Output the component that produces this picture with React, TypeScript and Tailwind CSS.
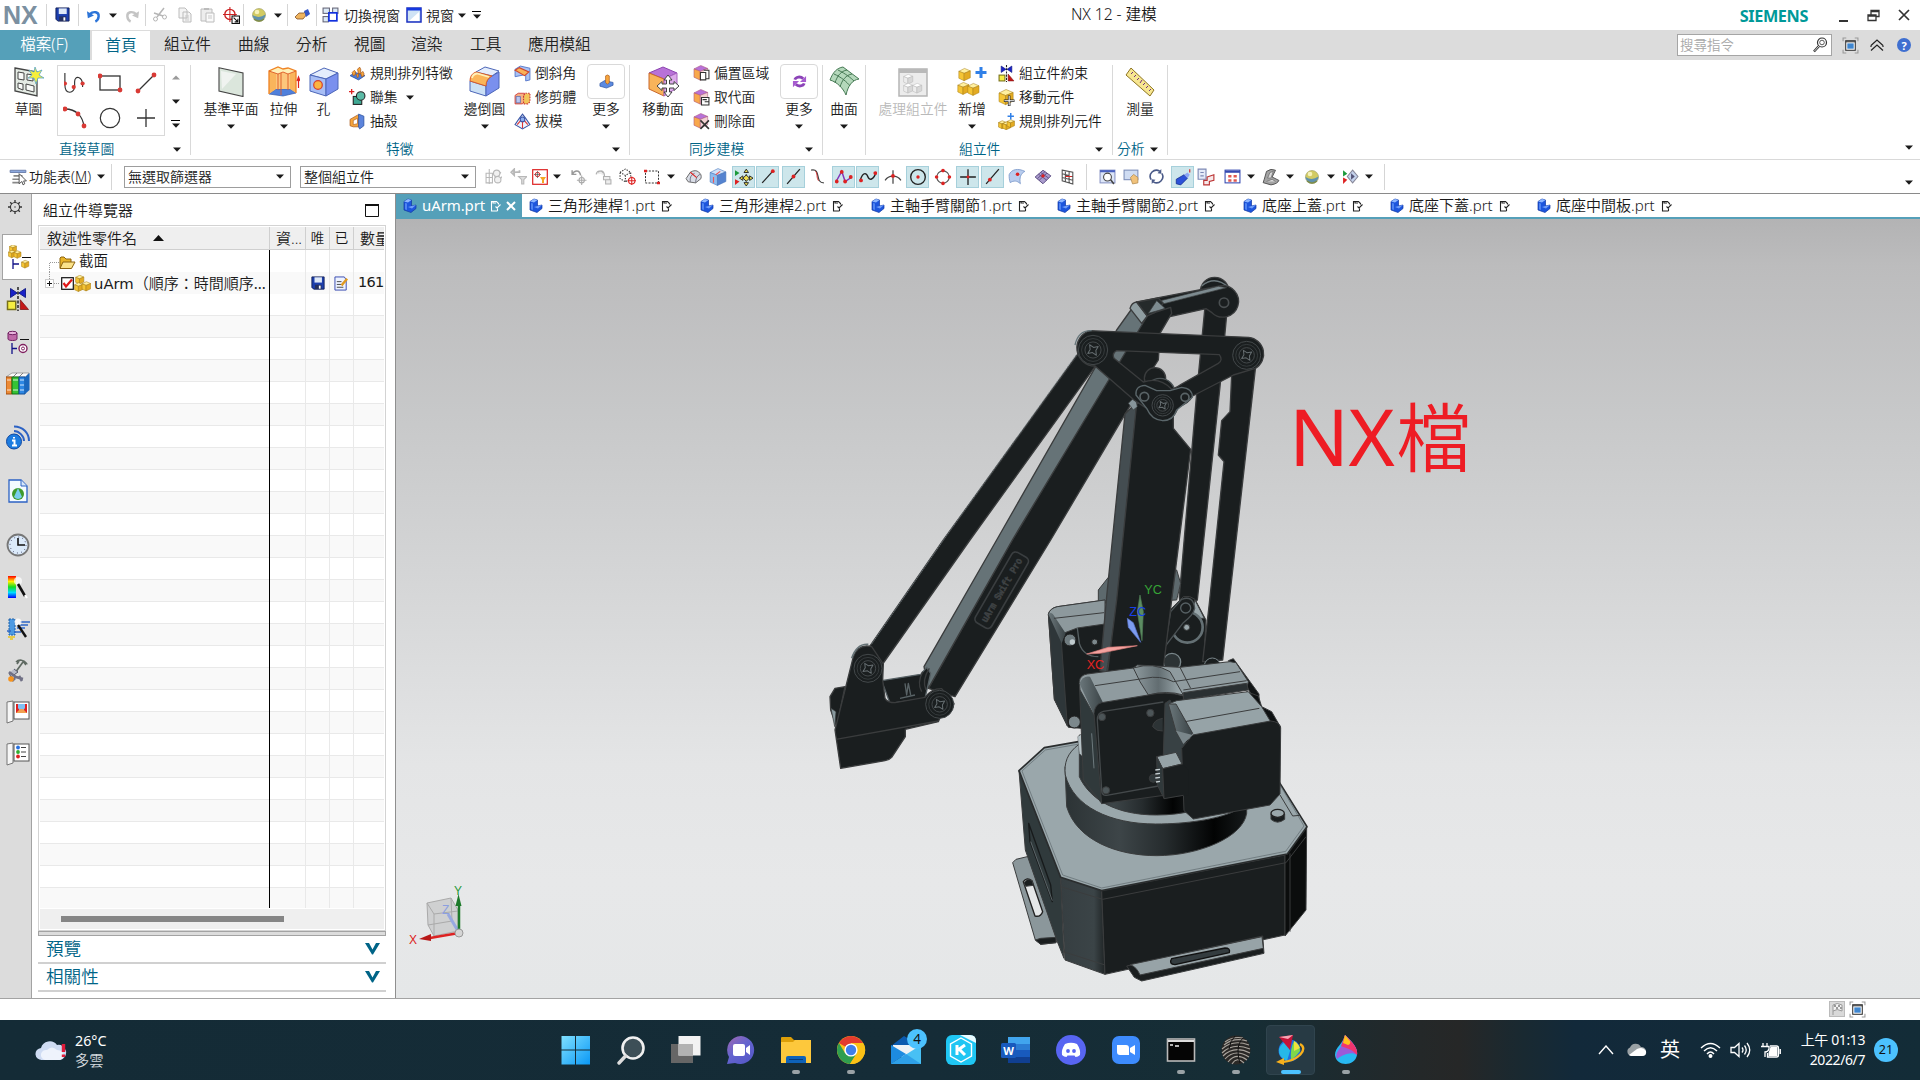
import React from "react";
import type { ReactNode } from "react";

const Ico = ({ s = 16, vb = "0 0 16 16", children }: { s?: number; vb?: string; children: ReactNode }) => (
  <svg width={s} height={s} viewBox={vb} className="shrink-0" fill="none">
    {children}
  </svg>
);

const Arrow = ({ color = "#1a1a1a", up = false }: { color?: string; up?: boolean }) => (
  <svg width="8" height="5" viewBox="0 0 8 5" className="shrink-0">
    <path d={up ? "M0 4.5L4 .5L8 4.5Z" : "M0 .5H8L4 4.7Z"} fill={color} />
  </svg>
);

const Cube = ({ a, b, c, x = 0, y = 0, k = 1, st = "#555" }: { a: string; b: string; c: string; x?: number; y?: number; k?: number; st?: string }) => (
  <g transform={`translate(${x} ${y}) scale(${k})`} stroke={st} strokeWidth={0.5 / k} strokeLinejoin="round">
    <path d="M8 .5L15 3.500L7.500 6.500L1 4Z" fill={a} />
    <path d="M1 4L7.500 6.500V15.500L1 12.500Z" fill={b} />
    <path d="M15 3.500L7.500 6.500V15.500L15 12Z" fill={c} />
  </g>
);

const Gold = ({ x = 0, y = 0, k = 0.5 }: { x?: number; y?: number; k?: number }) => (
  <Cube a="#fff0a0" b="#f5c535" c="#e3ab22" st="#a67c14" x={x} y={y} k={k} />
);

/* ---------- title bar icons ---------- */
const Save = ({ s = 15 }: { s?: number }) => (
  <Ico s={s}>
    <path d="M1 1H15V15H3L1 13Z" fill="#1d3fae" stroke="#101e55" />
    <rect x="4" y="1.5" width="8.5" height="6" fill="#dfe9f7" />
    <rect x="4.5" y="10" width="7.5" height="5" fill="#25305e" />
    <rect x="9" y="11" width="2" height="3.5" fill="#fff" />
  </Ico>
);
const Undo = ({ c = "#2c74d8", flip = false }: { c?: string; flip?: boolean }) => (
  <Ico s={15}>
    <g transform={flip ? "translate(16 0) scale(-1 1)" : undefined}>
      <path d="M4 6.500C8 3 14 4 13.500 9C13.300 11.500 12 13.500 10 14.500" stroke={c} strokeWidth="2.600" />
      <path d="M1 3.500L2 11L8.500 8Z" fill={c} />
    </g>
  </Ico>
);
const Sphere = () => (
  <Ico s={16}>
    <circle cx="8" cy="8" r="6.500" fill="#d2cb62" stroke="#9b9a60" strokeWidth=".6" />
    <path d="M1.600 8Q8 12 14.400 7.500A6.500 6.500 0 0 1 1.600 9Z" fill="#5f91ad" />
    <path d="M3 12Q8 16 13 12" stroke="#7e8c4c" strokeWidth="1.500" />
    <circle cx="6" cy="5" r="2.300" fill="#fffbd0" opacity=".8" />
  </Ico>
);
const Part = () => (
  <svg width="14" height="15" viewBox="0 0 14 15" className="shrink-0">
    <path d="M1 3.500L5 1L8.500 2V8L13 7V10.500L8 14.500L1 12Z" fill="#1c55dd" stroke="#1238a0" strokeWidth=".7" />
    <path d="M1 3.500L5 1L8.500 2L5 4.500Z" fill="#8db6ff" />
    <path d="M5 9L8.500 8L13 7L9 10.500Z" fill="#6f9dfa" />
    <path d="M2 5L4 5.500V12L2 11.300Z" fill="#4f84f2" />
  </svg>
);
const Note = ({ c = "#222" }: { c?: string }) => (
  <svg width="11" height="12" viewBox="0 0 11 12" fill="none" stroke={c} strokeWidth="1.100" className="shrink-0">
    <path d="M7.500 11H1.500V1.500H6.500L8.500 3.500V4.500M3 1V3H6M5.500 6.500L7 8L10.500 4.500M7.500 11V8.500" />
  </svg>
);
const FullIcon = () => (
  <Ico s={17}>
    <path d="M1 4V1H4M12 1H15V4M15 12V15H12M4 15H1V12" stroke="#999" />
    <rect x="3.500" y="3.500" width="9" height="9" fill="#fff" stroke="#333" />
    <rect x="5" y="6" width="6" height="5" fill="#3f86cf" />
    <path d="M3.500 4.500H12.500" stroke="#333" />
  </Ico>
);

const VSep = ({ cls }: { cls: string }) => <div className={`w-px shrink-0 bg-[#d5d5d5] ${cls}`} />;

function TitleBar() {
  return (
    <header className="flex h-[30px] w-full items-center bg-white text-[14px] whitespace-nowrap text-[#1a1a1a]">
      <span className="w-[46px] pl-[3px] text-[25px] leading-[30px] font-bold text-[#7b90a1] [font-family:'Liberation_Sans',sans-serif]">NX</span>
      <VSep cls="h-[22px]" />
      <div className="flex w-[31px] justify-center pb-px"><Save /></div>
      <VSep cls="h-[22px]" />
      <div className="flex w-[28px] justify-center"><Undo /></div>
      <div className="flex w-[12px] justify-center"><Arrow /></div>
      <div className="flex w-[26px] justify-center"><Undo c="#c4c4c4" flip /></div>
      <VSep cls="h-[22px]" />
      <div className="flex w-[28px] justify-center">
        <Ico><path d="M12 1L5 10M2 6L11 9" stroke="#b5b5b5" strokeWidth="1.500" /><circle cx="3.500" cy="12" r="2" stroke="#b5b5b5" /><circle cx="12.500" cy="10" r="2" stroke="#b5b5b5" /></Ico>
      </div>
      <div className="flex w-[22px] justify-center">
        <Ico><path d="M2 1H8L10 3V11H2ZM6 5H12L14 7V15H6Z" fill="#f4f4f4" stroke="#bcbcbc" /><path d="M8 9H12M8 11H12M8 13H12" stroke="#c9c9c9" /></Ico>
      </div>
      <div className="flex w-[23px] justify-center">
        <Ico><path d="M1 2H12V14H1Z" fill="#ededed" stroke="#bcbcbc" /><path d="M4 1H9V3H4Z" fill="#bbb" /><path d="M6 6H14V15H6Z" fill="#fafafa" stroke="#bcbcbc" /><path d="M8 9H12M8 11H12" stroke="#c9c9c9" /></Ico>
      </div>
      <div className="flex w-[24px] justify-center">
        <Ico s={17}><circle cx="6.500" cy="7" r="4.800" stroke="#c22" strokeWidth="1.300" /><path d="M6.500 0V14M0 7H13" stroke="#c22" /><rect x="8.500" y="8.500" width="7" height="7" fill="#fff" stroke="#111" /><path d="M10 10L14 14M14 11V14H11" stroke="#111" /></Ico>
      </div>
      <VSep cls="h-[22px]" />
      <div className="flex w-[30px] justify-center"><Sphere /></div>
      <div className="flex w-[8px] justify-center"><Arrow /></div>
      <VSep cls="ml-[5px] h-[22px]" />
      <div className="flex w-[28px] justify-center">
        <Ico><path d="M1 10L5 6L10 6L12 4L14 6L9 12L3 12Z" fill="#efb45e" stroke="#80502a" strokeWidth=".8" /><path d="M10 4L14 2L16 7L12 10Z" fill="#3557c8" /></Ico>
      </div>
      <VSep cls="h-[22px]" />
      <div className="flex w-[27px] justify-center">
        <Ico s={17}><rect x="1" y="1" width="6" height="5" fill="#dceaf8" stroke="#667" /><rect x="10" y="1" width="5" height="5" fill="#dceaf8" stroke="#667" /><rect x="1" y="9" width="5" height="5" fill="#dceaf8" stroke="#667" /><rect x="6.500" y="5.500" width="7.500" height="7.500" fill="#fff" stroke="#1130dd" strokeWidth="1.600" /></Ico>
      </div>
      <span>切換視窗</span>
      <div className="ml-[6px] flex w-[20px]">
        <Ico s={16}><rect x="1" y="1" width="14" height="14" fill="#cfe3f5" stroke="#1a2fc0" strokeWidth="1.500" /><path d="M1 1H15V3.500H1Z" fill="#1438e0" /><path d="M3 14L13 5V14Z" fill="#fff" /></Ico>
      </div>
      <span>視窗</span>
      <div className="ml-[4px] flex"><Arrow /></div>
      <div className="ml-[6px] flex flex-col items-center gap-[2px]"><span className="h-px w-[9px] bg-black" /><Arrow /></div>
      <span className="ml-[590px] w-[90px] text-[15.700px] tracking-[-0.1px]">NX 12 - 建模</span>
      <span className="ml-auto pt-[3px] text-[16.300px] font-bold tracking-[-0.4px] text-[#099] [font-family:'Noto_Sans',sans-serif]">SIEMENS</span>
      <div className="ml-[31px] flex h-full w-[81px] items-center gap-[19px]">
        <span className="mt-[11px] h-[2px] w-[9px] bg-[#333]" />
        <svg width="13" height="13" viewBox="0 0 13 13" fill="none" stroke="#333" strokeWidth="1.300"><path d="M1 6H9V11.500H1ZM1 7H9M4 5.500V1.500H12V7.500H9.500M4 2.500H12" /></svg>
        <svg width="12" height="12" viewBox="0 0 12 12" stroke="#333" strokeWidth="1.700" className="-ml-[1px]"><path d="M1 1L11 11M11 1L1 11" /></svg>
      </div>
    </header>
  );
}

function MenuTabs() {
  return (
    <nav className="flex h-[30px] w-full items-center bg-[#dcdcdc] text-[15.700px] whitespace-nowrap text-[#222]">
      <span className="flex h-full w-[90px] items-center justify-center bg-[#55a0b9] pr-[2px] text-[15.600px] text-white">檔案(F)</span>
      <span className="mt-px ml-[2px] flex h-[29px] w-[58px] items-center justify-center bg-white text-[#006487]">首頁</span>
      <span className="ml-[14px] w-[74px]">組立件</span>
      <span className="w-[58px]">曲線</span>
      <span className="w-[58px]">分析</span>
      <span className="w-[57px]">視圖</span>
      <span className="w-[59px]">渲染</span>
      <span className="w-[58px]">工具</span>
      <span>應用模組</span>
      <div className="ml-auto flex h-[22px] w-[155px] items-center justify-between border border-[#a5a5a5] bg-white pr-[3px] pl-[2px] text-[13.500px] text-[#a8a8a8]">
        <span>搜尋指令</span>
        <Ico><circle cx="10" cy="5.500" r="4.500" stroke="#333" strokeWidth="1.200" /><circle cx="10" cy="5.500" r="2.300" stroke="#333" strokeWidth=".8" /><path d="M7 9L2 14.500" stroke="#333" strokeWidth="2.500" /><path d="M7 9L2.500 14" stroke="#fff" strokeWidth=".8" /></Ico>
      </div>
      <div className="ml-[10px] flex w-[78px] items-center">
        <FullIcon />
        <svg width="14" height="12" viewBox="0 0 14 12" className="ml-[11px]"><path d="M1 6.500L7 1L13 6.500M1 11.500L7 6L13 11.500M1 6.500V8M13 6.500V8" fill="none" stroke="#222" strokeWidth="1.200" /></svg>
        <span className="ml-[13px] flex h-[14px] w-[14px] items-center justify-center rounded-full bg-[#3f6fd0] text-[11px] leading-none font-bold text-white">?</span>
      </div>
    </nav>
  );
}

/* ---------- ribbon ---------- */
const SketchIcon = () => (
  <Ico s={30} vb="0 0 30 30">
    <path d="M1 1L23 5V29L1 24Z" fill="#e4ebe4" stroke="#444" strokeWidth="1.300" />
    <path d="M4 5L10 6V13L4 12ZM13 7L19 8V14L13 13ZM4 16L9 17V23L4 21ZM12 17L20 19V25L12 23Z" fill="#f8faf8" stroke="#444" />
    <path d="M21 0L23 5L28 3L25 8L30 11L24 11L22 17L20 11L14 11L18 8L15 3L20 5Z" fill="#f6ef3a" stroke="#59a5c8" strokeWidth=".8" />
  </Ico>
);
const PlaneIcon = () => (
  <Ico s={30} vb="0 0 30 30"><path d="M3 .7L27 6V29.500L3 24Z" fill="#dbe6dc" stroke="#444" strokeWidth="1.100" /><path d="M5 4L20 7L6 22Z" fill="#f0f3f0" /></Ico>
);
const ExtrudeIcon = () => (
  <Ico s={32} vb="0 0 32 32">
    <path d="M1 28L8 23H22L28 27L15 30Z" fill="#4f80dc" stroke="#3557a8" strokeWidth=".7" />
    <path d="M1 5V28L8 23V2ZM28 5V27L22 23V3Z" fill="#f9b55c" />
    <path d="M8 23V8L13 6H19L22 8V23Z" fill="#fcc67c" />
    <path d="M1 5L10 1L15 3L20 2L28 5L20 8L15 6L10 8Z" fill="#fff0b8" />
    <path d="M1 28V5L10 1L15 3L20 2L28 5V27" stroke="#ef8324" strokeWidth="1.300" />
    <path d="M10 8V24M13 7V29M20 8V24M1 5L10 8L15 6L20 8L28 5" stroke="#dd5a26" strokeWidth=".9" />
    <path d="M30.500 22V13M29 15L30.500 11L32 15" stroke="#d22" strokeWidth="1.200" />
  </Ico>
);
const HoleIcon = () => (
  <Ico s={30} vb="0 0 30 30">
    <path d="M1 8L15 1L29 6L17 12Z" fill="#e4edfc" stroke="#4c66b8" strokeLinejoin="round" />
    <path d="M1 8L17 12V29L1 24Z" fill="#a8bef5" stroke="#4c66b8" strokeLinejoin="round" />
    <path d="M29 6L17 12V29L29 22Z" fill="#7a90ee" stroke="#4c66b8" strokeLinejoin="round" />
    <circle cx="9" cy="18" r="4.300" fill="#fbb440" stroke="#d8402c" strokeWidth="1.200" />
  </Ico>
);
const BlendIcon = () => (
  <Ico s={31} vb="0 0 31 31">
    <path d="M1 15L17 20V30L1 25Z" fill="#cbe0f5" stroke="#4c66b8" />
    <path d="M17 20Q17 13 23 10L30 6V22L17 30Z" fill="#7a90ee" stroke="#4c66b8" />
    <path d="M7 6L16 1L30 5L23 10Z" fill="#e4edfc" stroke="#4c66b8" />
    <path d="M1 15Q1 8 7 6L23 10Q17 13 17 20Z" fill="#fbb559" stroke="#d85a2c" />
    <path d="M3 12Q4 8 8 7.500L20 11" stroke="#fff0b8" strokeWidth="1.800" />
  </Ico>
);
const MoveFaceIcon = () => (
  <Ico s={31} vb="0 0 31 31">
    <path d="M1 7L15 1L29 7L16 13Z" fill="#b872d8" stroke="#8c44b0" /><path d="M1 7L16 13V30L1 23Z" fill="#f9b45a" stroke="#c9682c" /><path d="M29 7L16 13V30L29 22Z" fill="#dcaaea" stroke="#a864c0" />
    <path d="M20 9L24 14H21.500V18H26V15.500L31 20L26 24.500V22H21.500V26H24L20 31L16 26H18.500V22H14V24.500L9 20L14 15.500V18H18.500V14H16Z" fill="#fff" stroke="#444" />
  </Ico>
);
const SurfaceIcon = () => (
  <Ico s={31} vb="0 0 31 31"><path d="M1 14C4 6 8 2 14 1L30 13C23 14 19 20 17 29C14 22 8 16 1 14Z" fill="#b4d8bb" stroke="#477a55" /><path d="M5 8C12 11 18 16 21 20M9 4C17 8 22 12 25 15M6 17C8 10 12 5 18 4M11 21C13 14 17 9 23 8" stroke="#477a55" /></Ico>
);
const ProcessIcon = () => (
  <Ico s={30} vb="0 0 30 30"><rect x="1" y="2" width="28" height="27" fill="#ececec" stroke="#b5b5b5" strokeWidth="1.500" /><path d="M1 2H29V6H1Z" fill="#b9b9b9" /><Cube a="#fff" b="#ededed" c="#d8d8d8" st="#b5b5b5" x={5} y={7} k={0.65} /><Cube a="#fff" b="#ededed" c="#d8d8d8" st="#b5b5b5" x={5} y={16} k={0.65} /><Cube a="#fff" b="#ededed" c="#d8d8d8" st="#b5b5b5" x={14} y={16} k={0.65} /></Ico>
);
const AddIcon = () => (
  <Ico s={30} vb="0 0 30 30"><Gold x={1} y={1} k={0.82} /><Gold x={0} y={15} k={0.8} /><Gold x={10} y={16} k={0.8} /><path d="M24 0V11M18.500 5.500H29.500" stroke="#3080e8" strokeWidth="3" /></Ico>
);
const RulerIcon = () => (
  <Ico s={30} vb="0 0 30 30"><path d="M6 1L29 23L25 29L1 8Z" fill="#f7e690" stroke="#8d7422" /><path d="M8 5L6 7M11 8L9 10M14 11L12 13M17 13L15 16M20 16L18 18M23 19L21 21M26 22L24 24" stroke="#6e3080" strokeWidth="1" /></Ico>
);

const P1 = () => (<Ico s={17}><path d="M1 10L6 7L15 10L9 14Z" fill="#4c7bd9" stroke="#294f9c" strokeWidth=".7" /><path d="M3 7L5 5L6 6V9L4 10ZM8 4L10 2L11 4V8L9 8ZM11 8L13 6L14 8V10L12 11ZM7 9L9 8V11L8 12Z" fill="#f7a63c" stroke="#a85818" strokeWidth=".7" /></Ico>);
const P2 = () => (<Ico s={17}><rect x="4" y="7" width="8" height="7.500" fill="#3fa893" stroke="#222" /><circle cx="11" cy="6.500" r="4" fill="#5cbba7" stroke="#222" /><path d="M2.500 0V5M0 2.500H5" stroke="#d22" strokeWidth="1.200" /></Ico>);
const P3 = () => (<Ico s={17}><path d="M1 6L8 2L11 3V13L4 13L1 12Z" fill="#f7a63c" stroke="#a85818" strokeWidth=".7" /><path d="M9 1L14 3V12L10 15L9 13Z" fill="#5c84dc" stroke="#294f9c" strokeWidth=".7" /><path d="M4 7L8 5V10L4 11Z" fill="#fff" stroke="#a85818" strokeWidth=".6" /></Ico>);
const P4 = () => (<Ico s={17}><path d="M1 4L6 1L15 3V14L11 15V9L1 11Z" fill="#a9c2f2" stroke="#4c6fc8" strokeWidth=".8" /><path d="M1 5L5 2.500L14 6.500L10 10Z" fill="#f9b258" stroke="#d2442a" /></Ico>);
const P5 = () => (<Ico s={17}><path d="M1 6L4 4H10V12L8 14H1Z" fill="#f6b082" stroke="#c33" strokeWidth=".8" /><path d="M2 7H6V13H2Z" fill="#b9c6ef" stroke="#5566b0" strokeWidth=".7" /><path d="M9 6L11 4H15V12L13 14H9Z" fill="#f2c55a" stroke="#c33" strokeDasharray="1.500 1" /></Ico>);
const P6 = () => (<Ico s={17}><path d="M8 1L11 5L15 11L8 15L1 11L5 5Z" fill="#eef3fc" stroke="#3a55a5" /><path d="M8 4V14M8 5L3 11M8 5L13 11" stroke="#d33" /><circle cx="8" cy="6" r="2.200" fill="#8fb0f0" stroke="#3a55a5" /></Ico>);
const FaceSm = ({ d }: { d: ReactNode }) => (<Ico s={17}><Cube a="#b872d8" b="#f8a84c" c="#f2d2d2" st="#a8507a" k={0.92} />{d}</Ico>);
const F1 = () => <FaceSm d={<path d="M7 7H12V14H7ZM10 5H15V13H12" fill="#fff" stroke="#333" />} />;
const F2 = () => <FaceSm d={<path d="M8 8H15V15H8ZM9 10H13M11 12H15" fill="#fff" stroke="#333" />} />;
const F3 = () => <FaceSm d={<path d="M7 7L15 15M15 7L7 15" stroke="#333" strokeWidth="1.500" />} />;
const A1 = ({ s = 17 }: { s?: number }) => (<Ico s={s}><path d="M3 1L7.500 4L3 7ZM13 1L8.500 4L13 7Z" fill="#1a22c8" stroke="#101880" strokeWidth=".6" /><path d="M8 0V16" stroke="#222" strokeDasharray="2 1" /><rect x="1" y="9.500" width="5.500" height="5.500" fill="#f6ee42" stroke="#77701a" /><path d="M9.500 8.500L15 15H9.500Z" fill="#c41818" stroke="#711" strokeWidth=".5" /></Ico>);
const A2 = () => (<Ico s={17}><Gold k={0.95} /><path d="M10.500 6V16M5.500 11H15.500" stroke="#222" strokeWidth="2.400" /><path d="M10.500 6.500V15.500M6 11H15" stroke="#fff" strokeWidth="1" /></Ico>);
const A3 = () => (<Ico s={17}><Gold x={0} y={7} k={0.5} /><Gold x={4} y={8} k={0.5} /><Gold x={8} y={6} k={0.5} /><path d="M12 0V6M9 3H15" stroke="#3080e8" strokeWidth="1.400" /></Ico>);
const M1 = () => (<Ico s={15}><path d="M1 10L6 7L15 9L15 12L8 15L1 13Z" fill="#5c8ae0" stroke="#294f9c" strokeWidth=".7" /><path d="M7 2Q9 0 11 2V9L9 11L7 9Z" fill="#f7a63c" stroke="#a85818" strokeWidth=".7" /></Ico>);
const M2 = () => (<Ico s={15}><path d="M3 6C4 3 9 2 12 5M13 10C12 13 7 14 4 11" stroke="#8c44b8" strokeWidth="3" /><path d="M15 2V8.500H8.500ZM1 14V7.500H7.500Z" fill="#a75bd0" /></Ico>);

function Big({ icon, label, w, arrow = true, dim = false }: { icon: ReactNode; label: string; w: string; arrow?: boolean; dim?: boolean }) {
  return (
    <div className={`flex shrink-0 flex-col items-center pt-[5px] ${w}`}>
      <div className="flex h-[31px] items-center">{icon}</div>
      <span className={`mt-[2px] h-[21px] leading-[20px] ${dim ? "text-[#b9b9b9]" : ""}`}>{label}</span>
      <div className="mt-[4px] flex h-[5px]">{arrow && <Arrow />}</div>
    </div>
  );
}
function More({ icon }: { icon: ReactNode }) {
  return (
    <div className="flex w-[38px] shrink-0 flex-col items-center pt-[3px]">
      <div className="flex h-[35px] w-[38px] items-center justify-center rounded-[4px] border border-[#d9d9d9]">{icon}</div>
      <span className="h-[21px] leading-[20px]">更多</span>
      <div className="mt-[4px] flex h-[5px]"><Arrow /></div>
    </div>
  );
}
function Smalls({ items, w }: { items: [ReactNode, string, boolean?][]; w: string }) {
  return (
    <div className={`flex shrink-0 flex-col ${w}`}>
      {items.map(([ic, t, a]) => (
        <div key={t} className="flex h-[24px] items-center gap-[4px]">
          {ic}
          <span>{t}</span>
          {a && <span className="ml-[4px] flex"><Arrow /></span>}
        </div>
      ))}
    </div>
  );
}
function Group({ w, label, pad, arrowMr, children }: { w: string; label?: string; pad?: string; arrowMr?: string; children: ReactNode }) {
  return (
    <section className={`flex h-full shrink-0 ${w}`}>
      <div className="flex min-w-0 flex-1 flex-col">
        <div className="flex h-[78px] w-full">{children}</div>
        <div className={`flex h-[20px] items-center text-[#006487] ${pad ?? ""}`}>
          <span className="leading-[18px]">{label}</span>
          {arrowMr && <span className={`ml-auto flex ${arrowMr}`}><Arrow /></span>}
        </div>
      </div>
      <div className="mt-[4px] h-[90px] w-px bg-[#d9d9d9]" />
    </section>
  );
}

function Ribbon() {
  const dot = (x: number, y: number) => <circle cx={x} cy={y} r="2.400" fill="#d93a35" />;
  return (
    <div className="flex h-[100px] w-full border-b border-[#d9d9d9] bg-white pt-px text-[13.800px] whitespace-nowrap text-[#1a1a1a]">
      <Group w="w-[191px]" label="直接草圖" pad="pl-[59px]" arrowMr="mr-[9px]">
        <Big w="w-[57px]" icon={<SketchIcon />} label="草圖" arrow={false} />
        <div className="mt-[4px] grid h-[71px] w-[108px] grid-cols-3 place-items-center border border-[#d9d9d9]">
          <Ico s={23} vb="3 1 26 26"><path d="M4 2V15C4 27 15 26 15 17V12C15 4 24 6 24 16V18" stroke="#333" strokeWidth="1.300" />{dot(4, 14)}{dot(14, 18)}{dot(24, 14)}</Ico>
          <Ico s={26} vb="1 0 26 26"><rect x="3" y="6" width="20" height="14" stroke="#333" strokeWidth="1.300" />{dot(3, 6)}{dot(23, 20)}</Ico>
          <Ico s={26} vb="0 0 26 26"><path d="M5 21L21 5" stroke="#333" strokeWidth="1.300" />{dot(5, 21)}{dot(21, 5)}</Ico>
          <Ico s={26} vb="2 0 26 26"><path d="M4 4C15 4 22 11 23 22" stroke="#333" strokeWidth="1.300" />{dot(4, 4)}{dot(17, 9)}{dot(23, 21)}</Ico>
          <Ico s={26} vb="1 0 26 26"><circle cx="13" cy="13" r="9.700" stroke="#333" strokeWidth="1.200" /></Ico>
          <Ico s={26} vb="0 0 26 26"><path d="M13 4V22M4 13H22" stroke="#333" strokeWidth="1.300" /></Ico>
        </div>
        <div className="flex w-[21px] flex-col items-center pt-[14px]">
          <Arrow up color="#9a9a9a" />
          <span className="mt-[19px] flex"><Arrow /></span>
          <span className="mt-[16px] mb-[2px] h-px w-[9px] bg-black" />
          <Arrow />
        </div>
      </Group>
      <Group w="w-[439px]" label="特徵" pad="pl-[195px]" arrowMr="mr-[9px]">
        <div className="w-[3px]" />
        <Big w="w-[74px]" icon={<PlaneIcon />} label="基準平面" />
        <Big w="w-[31px]" icon={<ExtrudeIcon />} label="拉伸" />
        <Big w="w-[49px]" icon={<HoleIcon />} label="孔" arrow={false} />
        <Smalls w="w-[115px] ml-px" items={[[<P1 />, "規則排列特徵"], [<P2 />, "聯集", true], [<P3 />, "抽殼"]]} />
        <Big w="w-[41px]" icon={<BlendIcon />} label="邊倒圓" />
        <Smalls w="ml-[9px] w-[73px]" items={[[<P4 />, "倒斜角"], [<P5 />, "修剪體"], [<P6 />, "拔模"]]} />
        <More icon={<M1 />} />
      </Group>
      <Group w="w-[193px]" label="同步建模" pad="pl-[59px]" arrowMr="mr-[9px]">
        <div className="w-[8px]" />
        <Big w="w-[50px]" icon={<MoveFaceIcon />} label="移動面" arrow={false} />
        <Smalls w="ml-[5px] w-[87px]" items={[[<F1 />, "偏置區域"], [<F2 />, "取代面"], [<F3 />, "刪除面"]]} />
        <More icon={<M2 />} />
      </Group>
      <Group w="w-[43px]"><Big w="w-[42px]" icon={<SurfaceIcon />} label="曲面" /></Group>
      <Group w="w-[247px]" label="組立件" pad="pl-[93px]" arrowMr="mr-[9px]">
        <div className="w-[12px]" />
        <Big w="w-[70px]" icon={<ProcessIcon />} label="處理組立件" arrow={false} dim />
        <Big w="ml-[4px] w-[40px]" icon={<AddIcon />} label="新增" />
        <Smalls w="ml-[6px] w-[100px]" items={[[<A1 />, "組立件約束"], [<A2 />, "移動元件"], [<A3 />, "規則排列元件"]]} />
      </Group>
      <Group w="w-[55px]" label="分析" pad="pl-[4px]" arrowMr="mr-[9px]">
        <Big w="w-[54px]" icon={<RulerIcon />} label="測量" arrow={false} />
      </Group>
      <div className="mt-[84px] mr-[7px] ml-auto"><Arrow /></div>
    </div>
  );
}

/* ---------- selection toolbar ---------- */
const R = "#d22";
const gr = "#b8b8b8";
const tools: [string, ReactNode, number?][] = [
  ["ml-[5px] w-[24px]", <Ico s={17}><path d="M4 1V15M1 5H7V14H1ZM1 9H7M8 4L12 7L15 4M9 8L13 12L16 8" stroke={gr} /><circle cx="11" cy="5" r="3" stroke={gr} fill="#f1f1f1" /><circle cx="12" cy="11" r="3" stroke={gr} fill="#f1f1f1" /></Ico>],
  ["ml-[2px] w-[22px]", <Ico s={17}><path d="M1 4L4 1V7ZM3 4H9V2" stroke={gr} fill="#ddd" strokeWidth="1.500" /><path d="M8 8H16L13 11V15H11V11Z" fill="#ddd" stroke={gr} /></Ico>],
  ["w-[22px]", <Ico s={16}><rect x=".7" y=".7" width="14.600" height="14.600" stroke={R} strokeWidth="1.200" fill="#fff" /><circle cx="5.500" cy="5.500" r="2.200" stroke={R} /><path d="M5.500 2V9M2 5.500H9" stroke="#555" strokeWidth=".7" /><path d="M8 8H14L12 11V14H10V11Z" fill="#f5a623" /></Ico>],
  ["w-[12px]", <Arrow />],
  ["w-[30px]", <Ico s={17}><path d="M2 2V6H6M2 6C4 2 9 1 10 7" stroke="#999" strokeWidth="1.400" /><circle cx="11" cy="11.500" r="2.500" stroke="#aaa" /><path d="M11 7V16M6.500 11.500H15.500" stroke="#aaa" /></Ico>],
  ["w-[20px]", <Ico s={17}><path d="M1 6C2 2 6 2 8 5M3 4C6 1 9 3 9 8M8 8H14V11H8ZM10 11H15V15H10Z" fill="#ededed" stroke="#b0b0b0" /></Ico>],
  ["w-[28px]", <Ico s={17}><path d="M1 4L6 1L11 4V10L6 13L1 10ZM1 4L6 7L11 4M6 7V13" stroke="#333" strokeDasharray="1.200 1.200" /><circle cx="12" cy="12" r="3" stroke={R} fill="#fff" /><path d="M12 8V16M8 12H16" stroke={R} /></Ico>],
  ["w-[22px]", <Ico s={16}><rect x="1.500" y="2" width="13" height="12" stroke="#333" strokeDasharray="2 1.300" /><path d="M0 2H3M13 14H16" stroke={R} strokeWidth="2.500" /></Ico>],
  ["w-[16px]", <Arrow />],
  ["w-[28px]", <Ico s={17}><path d="M1 10L5 4Q10 1 13 4Q16 6 15 10L10 14L3 13Z" fill="#d9dde6" stroke="#666" strokeWidth=".9" /><path d="M5 13Q4 7 9 5M10 14Q10 8 14 6" stroke="#667" strokeWidth=".8" /><path d="M5 4L11 9" stroke={R} /></Ico>],
  ["w-[21px]", <Ico s={18}><Cube a="#cfe2fa" b="#8fbcee" c="#5583d0" st="#4372b8" /><path d="M4 8V13M10 3L6 6" stroke="#e55" /></Ico>],
  ["ml-[4px] w-[23px]", <Ico s={18}><path d="M0 2L4 4.500L0 7Z" fill="#1b9a3a" /><path d="M0 10L4 12L0 15Z" fill={R} /><path d="M10 3V14M5 9H15" stroke="#222" strokeDasharray="1.500 1" /><path d="M10 1L12 4H8ZM10 16L12 13H8ZM4 9L7 7V11ZM16 9L13 7V11Z" fill="#f0e050" stroke="#222" strokeWidth=".8" /><rect x="8" y="7" width="4" height="4" fill="#f0e050" stroke="#222" strokeWidth=".8" transform="rotate(45 10 9)" /></Ico>, 1],
  ["ml-[1px] w-[23px]", <Ico s={17}><path d="M3 14L13 3" stroke="#222" strokeWidth="1.200" /><circle cx="13" cy="3" r="1.800" fill={R} /></Ico>, 1],
  ["ml-[3px] w-[23px]", <Ico s={17}><path d="M2 15L14 1" stroke="#222" strokeWidth="1.200" /><circle cx="8" cy="8" r="1.800" fill={R} /></Ico>, 1],
  ["w-[25px]", <Ico s={17}><path d="M2 2C12 0 5 14 14 14" stroke="#444" strokeWidth="1.200" /><path d="M6 3C8 4 7 10 9 12" stroke={R} strokeWidth=".8" /></Ico>],
  ["ml-[2px] w-[23px]", <Ico s={18}><path d="M1 12L6 3L9 12L15 8" stroke="#8033bb" strokeWidth="1.300" /><g fill={R}><circle cx="1.500" cy="12" r="1.700" /><circle cx="6" cy="3.500" r="1.700" /><circle cx="9" cy="12" r="1.700" /><circle cx="14" cy="8" r="1.700" /></g></Ico>, 1],
  ["ml-[1px] w-[23px]", <Ico s={18}><path d="M1 11C4 2 7 5 8 8S13 11 15 4" stroke="#222" strokeWidth="1.300" /><circle cx="1.800" cy="11" r="1.700" fill={R} /><circle cx="14.500" cy="4.500" r="1.700" fill={R} /></Ico>, 1],
  ["w-[27px]", <Ico s={18}><path d="M1 11C4 6 12 6 15 11M8 2V14" stroke="#444" strokeWidth="1.100" /><circle cx="8" cy="7" r="1.700" fill={R} /></Ico>],
  ["w-[23px]", <Ico s={18}><circle cx="8" cy="8" r="6.500" stroke="#222" strokeWidth="1.200" /><circle cx="8" cy="8" r="1.500" fill={R} /></Ico>, 1],
  ["w-[27px]", <Ico s={18}><circle cx="8" cy="8" r="5.500" stroke="#555" /><g fill={R}><circle cx="8" cy="2.300" r="1.600" /><circle cx="8" cy="13.700" r="1.600" /><circle cx="2.300" cy="8" r="1.600" /><circle cx="13.700" cy="8" r="1.600" /></g></Ico>],
  ["w-[23px]", <Ico s={18}><path d="M8 1V15M1 8H15" stroke="#222" strokeWidth="1.200" /><circle cx="8" cy="8" r="1.300" fill={R} /></Ico>, 1],
  ["ml-[2px] w-[23px]", <Ico s={17}><path d="M2 15L14 1" stroke="#222" strokeWidth="1.200" /><circle cx="5.500" cy="11" r="1.800" fill={R} /></Ico>, 1],
  ["w-[26px]", <Ico s={18}><path d="M1 6C3 1 9 0 15 3C11 5 10 9 11 14C8 11 5 11 2 13C1 10 1 8 1 6Z" fill="#b9cdee" stroke="#7f9ccc" strokeWidth=".8" /><circle cx="8.500" cy="5.500" r="1.600" fill={R} /></Ico>],
  ["w-[26px]", <Ico s={18}><path d="M1 8L8 2L15 7L8 14Z" fill="#a99bcc" stroke="#54447c" strokeWidth=".8" /><path d="M4 5.500L11.500 11M6 4L13 9M4.500 11L11.500 4.500M3 9.500L10 3" stroke="#54447c" strokeWidth=".7" /><circle cx="8" cy="7" r="1.500" fill={R} /></Ico>],
  ["w-[22px]", <Ico s={17}><path d="M3 2L13 4V15L3 12ZM6 2.500V13M9.500 3V14M3 5.500L13 8M3 9L13 11.500" stroke="#555" /><path d="M6 8H12" stroke={R} /></Ico>],
  ["ml-[8px] h-[26px] w-px bg-[#d5d5d5]", null],
  ["ml-[8px] w-[24px]", <Ico s={17}><rect x="1" y="2" width="14" height="12" fill="#dde6f8" stroke="#8894c4" /><path d="M1 3H15" stroke="#4a62c0" strokeWidth="2" /><circle cx="8" cy="8.500" r="3.700" fill="#fff" stroke="#444" /><path d="M11 11L14 15" stroke="#444" strokeWidth="1.500" /></Ico>],
  ["w-[24px]", <Ico s={17}><rect x="1" y="2" width="13" height="9" fill="#cfdcf2" stroke="#7b8db8" /><path d="M7 9L10 6L14 9V14L9 15Z" fill="#f1c27a" stroke="#b08a50" strokeWidth=".7" /></Ico>],
  ["w-[26px]", <Ico s={17}><path d="M3 11A5.800 5.800 0 0 1 11 3M13 5A5.800 5.800 0 0 1 5 13" stroke="#4a5a88" strokeWidth="1.500" /><path d="M9 5L12.500 1V5.500ZM7 11L3.500 15V10.500Z" fill="#4a5a88" /></Ico>],
  ["ml-[2px] w-[23px]", <Ico s={18}><path d="M2 10L9 6L12 9L6 15L2 14Z" fill="#2c52d8" stroke="#152f90" strokeWidth=".7" /><path d="M9 6L12 4L14 6L12 9Z" fill="#8ba5f4" /><path d="M14 1V4" stroke={R} /></Ico>, 1],
  ["w-[24px]", <Ico s={18}><path d="M1 1H8V10H1ZM3 4H6M3 7H6" fill="#e4eaf8" stroke="#7c88b4" /><path d="M9 8L15 6V11L11 12V15H6V11H9Z" fill="#f6e9ea" stroke="#b33" /></Ico>],
  ["w-[28px]", <Ico s={17}><rect x="1" y="2" width="14" height="12" fill="#fff" stroke="#3448b0" /><path d="M1 3.500H15" stroke="#3448b0" strokeWidth="2" /><path d="M4 6.500H7V9H4ZM9 6.500H12V9H9ZM4 10.500H7V13H4ZM9 10.500H12V13H9Z" fill="#e0574f" /></Ico>],
  ["w-[10px]", <Arrow />],
  ["w-[30px]", <Ico s={18}><path d="M2 10L4 3Q8 0 12 2L9 8L15 11Q14 14 8 15L1 13Z" fill="#a3a3a3" stroke="#4c4c4c" strokeWidth=".8" /><path d="M5 9L7 4L10 3L8 9ZM4 12L9 10L12 12" fill="#d8d8d8" stroke="#666" strokeWidth=".6" /></Ico>],
  ["w-[8px]", <Arrow />],
  ["ml-[2px] w-[31px]", <Sphere />],
  ["w-[8px]", <Arrow />],
  ["w-[30px]", <Ico s={17}><path d="M1 2L5 5.500L1 8Z" fill="#1b9a3a" /><path d="M1 9L5 11L1 15Z" fill={R} /><path d="M5 8L10 2L15 8L10 14Z" fill="#c4d2ec" stroke="#889" /><path d="M8.500 5L12 8L8.500 11Z" fill="#557" /></Ico>],
  ["w-[8px]", <Arrow />],
  ["ml-[11px] h-[26px] w-px bg-[#d5d5d5]", null],
];

function SelectionBar() {
  return (
    <div className="flex h-[34px] w-full items-center border-b border-[#8a8a8a] bg-white text-[14px] whitespace-nowrap text-[#1a1a1a]">
      <div className="ml-[9px] flex w-[20px]">
        <Ico s={18}><path d="M1 2H15V4H1Z" fill="#8ca8dd" stroke="#667aa8" strokeWidth=".8" /><path d="M4 7H12M3 10H9M3 13H9" stroke="#888" strokeWidth="1.500" /><path d="M9 5V14L11.500 12L12.500 15L14 14L13 11.500H15.500Z" fill="#fff" stroke="#444" strokeWidth=".8" /></Ico>
      </div>
      <span className="w-[67px] text-[14px]">功能表(<u>M</u>)</span>
      <span className="ml-px flex w-[14px]"><Arrow /></span>
      <VSep cls="h-[26px]" />
      <div className="ml-[12px] flex h-[22px] w-[167px] items-center justify-between border border-[#9d9d9d] pr-[6px] pl-[3px]"><span>無選取篩選器</span><Arrow /></div>
      <div className="ml-[9px] flex h-[22px] w-[176px] items-center justify-between border border-[#9d9d9d] pr-[6px] pl-[3px]"><span>整個組立件</span><Arrow /></div>
      {tools.map(([w, ic, hl], i) => (
        <div key={i} className={`flex shrink-0 items-center justify-center ${w} ${hl ? "h-[22px] border border-[#a6d0db] bg-[#cde6eb]" : ""}`}>{ic}</div>
      ))}
      <span className="mt-[12px] mr-[7px] ml-auto flex"><Arrow /></span>
    </div>
  );
}

/* ---------- resource rail ---------- */
const Book = () => <path d="M1 2L7 1V21L1 23Z" fill="#f6f6f6" stroke="#777" />;
const rail: [string, ReactNode][] = [
  ["mt-[7px]", <A1 s={24} />],
  ["mt-[19px]", <Ico s={24} vb="0 0 24 24"><path d="M2 3V9C2 11 11 11 11 9V3Z" fill="#c06aa8" stroke="#702060" /><ellipse cx="6.500" cy="3" rx="4.500" ry="1.700" fill="#e8b4dc" stroke="#702060" /><path d="M14 9.500H23" stroke="#111" /><path d="M6 13V24M6 18.500H11" stroke="#118" strokeWidth="1.300" /><circle cx="17" cy="18.500" r="4" fill="#fff" stroke="#802060" strokeWidth="1.400" /><circle cx="17" cy="18.500" r="1.500" stroke="#802060" /></Ico>],
  ["mt-[18px]", <Ico s={24} vb="0 0 24 24"><path d="M0 5L6 1H23L20 5Z" fill="#fafafa" stroke="#777" strokeWidth=".6" /><path d="M7 5L11 1M13 5L17 1" stroke="#666" strokeWidth=".8" /><path d="M0 5H6V22H0Z" fill="#ec8a36" stroke="#a34e10" /><path d="M6 5H13V22H6Z" fill="#35c435" stroke="#137013" /><path d="M13 5H19V22H13Z" fill="#2d87e4" stroke="#124f96" /><path d="M19 5L23.500 1V18L19 22Z" fill="#1b67bd" /><path d="M1 8H5M1 18H5M7 8H12M7 18H12M14 8H18M14 13H18M14 18H18" stroke="#fff" strokeWidth=".8" /></Ico>],
  ["mt-[29px]", <Ico s={25} vb="0 0 25 25"><path d="M8 6C13 6 18 11 18 16M8 1.500C17 1.500 23 8 23 16M9 10C12 10 14 13 14 16" stroke="#2c62c4" strokeWidth="2" /><circle cx="8" cy="16.500" r="7.500" fill="#1d7ce0" stroke="#1048a0" /><path d="M8 12V13.500M6 15.500H8.500V20M6 20.500H11" stroke="#fff" strokeWidth="2" /></Ico>],
  ["mt-[30px]", <Ico s={24} vb="0 0 24 24"><path d="M3 1H15L21 7V23H3Z" fill="#f4fbff" stroke="#2c62c4" strokeWidth="1.300" /><path d="M15 1V7H21" fill="#d5e6fa" stroke="#2c62c4" /><circle cx="12" cy="15" r="6" fill="#3f9a2a" /><path d="M12 9L16 18Q12 22 8 18Z" fill="#79cdec" /></Ico>],
  ["mt-[30px]", <Ico s={24} vb="0 0 24 24"><circle cx="12" cy="12" r="10.500" fill="#dbeafa" stroke="#777" strokeWidth="1.800" /><path d="M12 5V12H19" stroke="#111" strokeWidth="1.600" /><circle cx="12" cy="12" r="8" stroke="#446" strokeDasharray="1 3.190" /></Ico>],
  ["mt-[18px]", <Ico s={24} vb="0 0 24 24"><defs><linearGradient id="rb" x2="0" y2="1"><stop stopColor="red" /><stop offset=".25" stopColor="#fe0" /><stop offset=".5" stopColor="#1d2" /><stop offset=".75" stopColor="#0df" /><stop offset="1" stopColor="#00f" /></linearGradient></defs><rect x="2" y="1" width="8" height="22" fill="url(#rb)" /><circle cx="12" cy="6" r="4" fill="#fff" opacity=".7" /><path d="M12 9L19 21" stroke="#111" strokeWidth="2.600" /><path d="M19 20L21 23" stroke="#fff" strokeWidth="2" /></Ico>],
  ["mt-[18px]", <Ico s={24} vb="0 0 24 24"><path d="M3 2H9V18H3Z" fill="#4d9ae2" stroke="#2160a8" strokeDasharray="2 1" /><path d="M14 5H24M14 8H22M11 11H19M1 14H5M8 15H15" stroke="#2d66c6" strokeWidth="1.300" /><circle cx="12" cy="5" r="3.500" fill="#fff" opacity=".8" /><path d="M12 8L20 20" stroke="#111" strokeWidth="2.400" /><path d="M2 20H9M4 22H7" stroke="#e9c31c" strokeWidth="1.500" /></Ico>],
  ["mt-[18px]", <Ico s={24} vb="0 0 24 24"><path d="M10 3C13 0 18 1 20 4L17 3L9 14M13 2L11 5M17 2L20 6" stroke="#5f6a62" strokeWidth="1.700" /><path d="M8 10L12 13L5 18L3 14" fill="#b9bcc9" stroke="#55586c" /><path d="M3 13L10 18L17 20M13 17L16 22M9 19L6 22" stroke="#707085" strokeWidth="2.600" /><circle cx="5" cy="20" r="2.800" fill="#f7941e" /></Ico>],
  ["mt-[17px]", <Ico s={24} vb="0 0 24 24"><Book /><rect x="8" y="2" width="15" height="17" fill="#fff" stroke="#555" /><path d="M10 4H21V13H10Z" fill="#e01f1f" /><path d="M12 4H19V8L17 11H14L12 8Z" fill="#7fc0f4" /><path d="M10 13L14 9H17L21 13Z" fill="#f0a050" /></Ico>],
  ["mt-[18px]", <Ico s={24} vb="0 0 24 24"><Book /><rect x="8" y="2" width="15" height="17" fill="#fff" stroke="#555" /><circle cx="12" cy="5.500" r="1.900" fill="#2670e0" /><circle cx="12" cy="10" r="1.900" fill="#2fae2f" /><circle cx="12" cy="14.500" r="1.900" fill="#d22" /><path d="M15 5.500H20M15 10H20M15 14.500H20" stroke="#444" /></Ico>],
];
function Rail() {
  return (
    <aside className="flex h-full w-[32px] shrink-0 flex-col border-r border-[#a3a3a3] bg-[#dcdcdc]">
      <div className="flex h-[40px] pt-[6px] pl-[8px]">
        <Ico s={14}><circle cx="8" cy="8" r="5.200" stroke="#333" strokeWidth="1.300" /><path d="M8 0V3M8 13V16M0 8H3M13 8H16M2.500 2.500L4.500 4.500M11.500 11.500L13.500 13.500M13.500 2.500L11.500 4.500M2.500 13.500L4.500 11.500" stroke="#333" strokeWidth="1.500" /><circle cx="8" cy="8" r=".8" fill="#333" /></Ico>
      </div>
      <div className="-mr-px ml-[2px] flex h-[46px] items-center border-y border-l border-[#a3a3a3] bg-white pl-[5px]">
        <Ico s={24} vb="0 0 24 24"><Gold x={1} y={-0.500} k={0.5} /><Gold x={0} y={5} k={0.5} /><Gold x={5.500} y={5.500} k={0.5} /><path d="M14 12.500H23" stroke="#111" /><path d="M5 14V24M5 19H11" stroke="#118" strokeWidth="1.300" /><Gold x={13} y={15} k={0.52} /></Ico>
      </div>
      {rail.map(([m, ic], i) => (
        <div key={i} className={`flex h-[24px] shrink-0 items-center justify-center pl-[5px] ${m}`}>{ic}</div>
      ))}
    </aside>
  );
}

/* ---------- assembly navigator ---------- */
const cols = "grid grid-cols-[229px_1px_36px_24px_24px_30px]";
function Row({ i }: { i: number }) {
  return (
    <div className={`${cols} h-[22px] shrink-0 text-[15px] ${i % 2 ? "bg-[#f9f9f9]" : "bg-white"}`}>
      <div className="flex items-center border-b border-[#e9e9e9]">
        {i === 0 && (
          <>
            <svg width="17" height="22" viewBox="0 0 17 22" className="ml-[2px]"><path d="M7.500 22V12.500H17" stroke="#999" strokeDasharray="1 1" fill="none" /></svg>
            <svg width="17" height="14" viewBox="0 0 17 14" className="mt-[4px]"><path d="M1 2L2 1H5L7 3H12V12H1Z" fill="#e9b428" stroke="#8d6510" /><path d="M4 6H16L12.500 12.500H1Z" fill="#fbe38a" stroke="#8d6510" /></svg>
            <span className="mb-[2px] ml-[3px] text-[14.500px] leading-[18px]">截面</span>
          </>
        )}
        {i === 1 && (
          <>
            <svg width="16" height="22" viewBox="0 0 16 22" className="ml-[4px]"><path d="M5.500 0V7M10 11.500H16" stroke="#999" strokeDasharray="1 1" /><rect x="1.500" y="7.500" width="8" height="8" fill="#fff" stroke="#ccc" /><path d="M3 11.500H8M5.500 9V14" stroke="#111" /></svg>
            <svg width="13" height="13" viewBox="0 0 13 13" className="ml-px"><rect x=".7" y=".7" width="11.600" height="11.600" fill="#fff" stroke="#111" strokeWidth="1.200" /><path d="M2.500 6L5 9.500L11 2.500" stroke="#e01818" strokeWidth="2.200" fill="none" /></svg>
            <Ico s={17}><Gold x={1} y={0} k={0.55} /><Gold x={0} y={7} k={0.55} /><Gold x={7} y={6} k={0.58} /></Ico>
            <span className="ml-[3px] text-[14.800px] leading-[18px] font-normal whitespace-nowrap [font-family:'DejaVu_Sans','Noto_Sans_CJK_TC',sans-serif]">uArm<span className="text-[15px] font-[350] [font-family:'Noto_Sans_CJK_TC',sans-serif]">（順序：時間順序...</span></span>
          </>
        )}
      </div>
      <div className="bg-black" />
      <div className="border-r border-b border-[#e9e9e9]" />
      <div className="flex items-center justify-center border-r border-b border-[#e9e9e9]">{i === 1 && <Save s={14} />}</div>
      <div className="flex items-center justify-center border-r border-b border-[#e9e9e9]">
        {i === 1 && <Ico s={15}><path d="M1 1H11L13 4V15H1Z" fill="#eef3ff" stroke="#3448b0" /><path d="M3 6H8M3 9H9M3 12H10" stroke="#444" /><path d="M8 10L14 3" stroke="#e09a20" strokeWidth="2.500" /></Ico>}
      </div>
      <div className="flex items-center border-b border-[#e9e9e9] pl-[4px] text-[14.500px] font-normal tracking-[-0.700px] [font-family:'DejaVu_Sans',sans-serif]">{i === 1 && "161"}</div>
    </div>
  );
}
function Navigator() {
  const head = "flex items-center border-r border-[#cfcfcf]";
  const section = (t: string) => (
    <div className="flex h-[28px] items-center justify-between border-b-2 border-[#d0d0d0] pr-[6px] pl-[8px] text-[17.600px] text-[#006487]">
      <span className="mb-px leading-[23px]">{t}</span>
      <svg width="15" height="12" viewBox="0 0 15 12"><path d="M0 0H4L7.500 6.500L11 0H15L8 11.500H7Z" fill="#006487" /></svg>
    </div>
  );
  return (
    <div className="flex h-full w-[363px] shrink-0 flex-col bg-white pr-[9px] pl-[6px] text-[#1a1a1a]">
      <div className="flex h-[31px] items-center justify-between pt-[2px] pr-[7px] pl-[5px] text-[15px]">
        <span>組立件導覽器</span>
        <svg width="14" height="13" viewBox="0 0 14 13"><path d="M.5 1H13.500V12.500H.5Z" fill="#fff" stroke="#111" /><path d="M0 1H14" stroke="#111" strokeWidth="2" /></svg>
      </div>
      <div className="flex h-[706px] flex-col border border-[#d3d3d3] p-px">
        <div className={`${cols} h-[23px] shrink-0 border-b border-[#cfcfcf] bg-[#efefef] text-[15px] whitespace-nowrap`}>
          <div className="flex items-center pl-[7px]">敘述性零件名<svg width="11" height="6" viewBox="0 0 11 6" className="ml-[16px]"><path d="M0 6L5.500 0L11 6Z" fill="#111" /></svg></div>
          <div className="bg-[#cfcfcf]" />
          <div className={`${head} pl-[6px]`}>資...</div>
          <div className={`${head} justify-center text-[13.500px]`}>唯</div>
          <div className={`${head} justify-center text-[13.500px]`}>已</div>
          <div className="flex items-center overflow-hidden pl-[6px]">數量</div>
        </div>
        <div className="flex h-[659px] flex-col overflow-hidden">
          {Array.from({ length: 30 }, (_, i) => <Row key={i} i={i} />)}
        </div>
        <div className="mt-[1px] flex h-[20px] items-center bg-[#efefef] pl-[21px]"><div className="h-[6px] w-[223px] bg-[#858585]" /></div>
      </div>
      <div className="h-[5px] border border-[#a3a3a3] bg-[#dcdcdc]" />
      {section("預覽")}
      {section("相關性")}
    </div>
  );
}

/* ---------- viewport ---------- */
const D = "#1a1e1f";
const L = "#9aa7ab";
const E = "#3a3c3d";
const Screw = ({ x, y, r }: { x: number; y: number; r: number }) => (
  <g stroke="#43484a" fill={D}>
    <circle cx={x} cy={y} r={r} strokeWidth="3" />
    <circle cx={x} cy={y} r={r * 0.78} strokeWidth="2" />
    <circle cx={x} cy={y} r={r * 0.55} strokeWidth="3" />
    <path d={`M${x - r * 0.3} ${y - r * 0.3}l${r * 0.3} ${r * 0.12}l${r * 0.3} ${-r * 0.12}l${-r * 0.1} ${r * 0.3}l${r * 0.1} ${r * 0.3}l${-r * 0.3} ${-r * 0.12}l${-r * 0.3} ${r * 0.12}l${r * 0.1} ${-r * 0.3}Z`} stroke="#666e71" strokeWidth="3" transform={`rotate(12 ${x} ${y})`} />
  </g>
);

function Robot() {
  return (
    <svg width="1524" height="779" viewBox="396 219 1524 779" className="block">
      <defs>
        <linearGradient id="ring" x1="0" x2="1"><stop stopColor="#2c3335" /><stop offset=".3" stopColor="#3d4548" /><stop offset=".55" stopColor="#262c2e" /><stop offset=".82" stopColor="#020303" /><stop offset="1" stopColor="#161a1b" /></linearGradient>
        <linearGradient id="side" x1="0" x2="1"><stop stopColor="#6b777b" /><stop offset="1" stopColor="#3a4346" /></linearGradient>
        <linearGradient id="hump" x1="0" x2="1"><stop stopColor="#8e9a9e" /><stop offset=".5" stopColor="#626d71" /><stop offset="1" stopColor="#a2afb3" /></linearGradient>
        <linearGradient id="corner" x1="0" x2="1"><stop stopColor="#363e41" /><stop offset=".75" stopColor="#3b4447" /><stop offset="1" stopColor="#1f2425" /></linearGradient>
      </defs>
      {/* rear links, in the upper frame */}
      <g transform="translate(1000 260) scale(.33333)" strokeLinejoin="round" stroke={E} strokeWidth="4">
        <circle cx="644" cy="95" r="43" fill={D} />
        <path d="M605 78Q645 45 685 82" fill="none" stroke="#6b777b" strokeWidth="4" />
        <path d="M615 140L680 165L660 380L592 1020L545 1060L538 1010L590 400Z" fill={D} />
        <path d="M415 126L480 112L660 78A47 47 0 1 1 636 158L618 146L500 172L470 160Z" fill={D} />
        <path d="M482 122L655 79L680 83L492 131Z" fill="#7d8b90" strokeWidth="2" />
        <circle cx="672" cy="128" r="14" fill={D} stroke="#4a4f51" strokeWidth="5" />
      </g>
      {/* base plate and rear motors */}
      <g transform="translate(800 540) scale(.33333)" strokeLinejoin="round" stroke={E} strokeWidth="3">
        <path d="M895 150L925 112L1130 90L1142 130L1130 180L895 190Z" fill="#5d696d" />
        <path d="M1100 220L1150 170Q1170 165 1185 178L1218 240L1212 350L1240 400H1080Z" fill={D} />
        <path d="M1185 180L1213 235L1170 235Z" fill={L} />
        <circle cx="1162" cy="262" r="46" fill={D} stroke="#647074" strokeWidth="8" />
        <circle cx="1160" cy="262" r="9" fill={L} />
        <path d="M1112 215L1145 178Q1180 165 1184 205Q1180 225 1150 248L1095 320Z" fill={D} stroke="#4a5154" strokeWidth="4" />
        <circle cx="1157" cy="204" r="15" fill={D} stroke="#566064" strokeWidth="4" />
        <circle cx="1116" cy="366" r="26" fill="#2c3335" stroke="#79868a" strokeWidth="4" />
        <path d="M745 222Q750 205 772 200L915 180V400L845 565L805 562L763 478Z" fill={D} />
        <path d="M745 222Q750 205 772 200L915 180V252L832 264L795 278L783 300Z" fill="#8d999d" />
        <path d="M745 222L783 290L802 558L763 478Z" fill="#2e3639" />
        <path d="M745 222Q755 212 765 232L797 280L785 310Z" fill="url(#side)" stroke="none" />
        <path d="M762 235L912 218" />
        <path d="M832 264L838 310Q850 350 895 350" fill="none" stroke="#555e61" strokeWidth="4" />
        <circle cx="810" cy="300" r="18" fill="#6f7b7f" stroke="#222" /><circle cx="817" cy="306" r="8" fill="#c0cbce" stroke="none" /><circle cx="884" cy="306" r="9" fill="#7c888c" stroke="#222" /><circle cx="823" cy="546" r="18" fill="#7c888c" stroke="#222" />
        <path d="M638 968L648 958L690 948L775 1195L768 1208L722 1213L706 1200Z" fill="#8b979b" />
        <path d="M706 1200L722 1213L768 1208V1192L722 1195Z" fill={D} />
        <path d="M670 1025Q680 1010 696 1022L728 1115Q722 1132 705 1128Z" fill="#e5e7e8" stroke="#222" strokeWidth="4" />
        <path d="M672 1030Q680 1012 696 1022L700 1036L677 1039Z" fill={D} />
        <path d="M657 692L782 1012L792 1255L770 1200L676 930Z" fill="#303a3c" />
        <path d="M686 850L690 905L757 1085L752 1035Z" fill="none" stroke="#171a1b" strokeWidth="4" />
        <path d="M692 905L757 1082" stroke="#7b878b" strokeWidth="2" />
        <path d="M782 1012L905 1052L915 1303L795 1260Z" fill="url(#corner)" />
        <path d="M905 1052L1455 945V1185L915 1303Z" fill={D} />
        <path d="M1455 945L1520 862L1518 1110L1455 1188Z" fill="#0b0d0d" />
        <path d="M657 692L733 623L835 605H1360L1440 730L1521 860L1462 942L905 1052L782 1012Z" fill={L} stroke="#2a2d2e" strokeWidth="5" />
        <path d="M666 693L736 630L838 612M1442 738L1512 858L1457 934L905 1044L788 1005L666 693" fill="none" stroke="#5d686c" strokeWidth="2" />
        <path d="M782 1040L908 1078L1458 968L1518 890M790 1235L915 1275M1470 940V1175" fill="none" />
        <path d="M1440 765L1478 828L1500 826" fill="none" />
        <path d="M1413 822V838Q1432 855 1454 838V822Z" fill={D} /><ellipse cx="1433" cy="820" rx="20" ry="12" fill={L} stroke="#222" strokeWidth="4" />
        <path d="M980 1278L1388 1188L1392 1240L1025 1323L1003 1312Z" fill={D} />
        <path d="M990 1274L1386 1190L1390 1225L1020 1305Q1010 1280 990 1274Z" fill="#97a3a7" />
        <path d="M1115 1256L1275 1224Q1292 1224 1288 1238L1125 1274Q1105 1272 1115 1256Z" fill="#343c3f" stroke="#111" strokeWidth="4" />
        <path d="M795 680L800 800C830 900 950 947 1070 947C1200 947 1330 890 1340 820V700Z" fill="url(#ring)" />
        <path d="M838 612C800 640 792 670 796 705C820 800 930 852 1067 852C1160 852 1250 838 1300 815L1340 700L900 590Z" fill={L} />
        <path d="M838 585V710C870 780 950 825 1070 825Q1130 825 1180 812V600Z" fill="url(#ring)" />
        <path d="M833 590L848 580V650L838 640Z" fill="#b6c2c6" strokeWidth="1" />
      </g>
      {/* upper arm with its bright flank */}
      <g transform="translate(800 540) scale(.33333)" strokeLinejoin="round" stroke={E} strokeWidth="4">
        <path d="M1040 -675L1112 -698L1115 -680L1080 -620L1075 -540L1030 -470L752 0L465 470L385 445L637 0Z" fill={D} />
        <path d="M1010 -714L1042 -672L637 0L385 445L372 380L590 0L950 -630Z" fill="#667377" />
        <path d="M1010 -714Q995 -712 990 -695L1025 -650L1042 -672Z" fill="#8f9da1" />
        <path d="M1010 -714L1075 -726L1090 -710L1065 -683L1042 -672Z" fill="#252a2b" />
        <path d="M1045 -680L1070 -718L1095 -695L1080 -690Z" fill="#7d8b90" strokeWidth="2" />
        <g transform="translate(606 151) rotate(-60)">
          <rect x="-122" y="-29" width="244" height="56" rx="14" fill="none" stroke="#3a3e40" strokeWidth="5" />
          <text x="0" y="9" textAnchor="middle" fontSize="31" fontWeight="700" fill="#3f4345" stroke="#3f4345" strokeWidth="1.500" fontFamily="Liberation Mono, monospace" textLength="216" lengthAdjust="spacingAndGlyphs">uArm Swift Pro</text>
        </g>
        {/* forearm rod and gripper */}
        <path d="M895 -600L835 -560L430 0L205 325L248 372L510 0L885 -520Z" fill={D} />
        <path d="M828 -555L440 -14L215 312" fill="none" stroke="#77858a" strokeWidth="2" strokeDasharray="5 3" />
        <path d="M105 445L135 440L110 560L92 510L90 470Z" fill={D} />
        <path d="M93 505L108 515L104 560Z" fill="#8a9a9f" strokeWidth="2" />
        <path d="M245 422L362 403L380 382L392 400L375 475L270 490Z" fill={D} stroke="#566064" />
        <path d="M315 430L320 465L325 430L332 465M300 475L345 465" stroke="#596366" fill="none" />
        <path d="M368 395Q350 430 365 455M388 385Q365 420 378 450" fill="none" />
        <path d="M160 350Q175 310 215 320L250 372L248 420L255 475Q262 488 285 488L375 472Q395 445 425 446L462 490Q460 515 425 522L415 545L316 568V590L275 652Q268 660 255 662L122 685L105 570Z" fill={D} />
        <path d="M108 598L415 543" />
        <path d="M155 355Q170 310 205 313" fill="none" stroke="#657276" strokeWidth="5" />
        <Screw x={204} y={385} r={42} />
        <Screw x={419} y={493} r={42} />
      </g>
      {/* vertical arm and triangular rocker */}
      <g transform="translate(1000 260) scale(.33333)" strokeLinejoin="round" stroke={E} strokeWidth="4">
        <circle cx="465" cy="355" r="32" fill={D} />
        <ellipse cx="480" cy="400" rx="45" ry="45" fill={D} stroke="#4a5255" />
        <path d="M375 462L412 425L348 1060L320 1236L300 1232L320 1010Z" fill="#444d51" />
        <path d="M410 430H520V505L572 568L515 1020L488 1240H322L350 1020Z" fill={D} />
        <path d="M385 430L405 410L412 440L400 450Z" fill="#87959a" strokeWidth="2" />
        <path d="M697 300L690 455L665 482L655 585L672 605L628 1030L608 1205L668 1200L688 1020L768 310Z" fill={D} />
        <path d="M270 212L746 232A50 50 0 0 1 766 325L700 345L578 408Q565 432 535 440Q520 482 488 482Q455 480 440 445L402 420L285 318A54 54 0 0 1 270 212ZM350 272Q335 280 342 295L430 366Q480 350 515 388Q535 380 545 372L655 310Q670 300 658 284Z" fill={D} fillRule="evenodd" />
        <path d="M408 405Q405 378 435 376L470 392H510L545 382Q578 385 577 412L530 450Q520 482 488 482Q455 480 440 445Z" fill={D} stroke="#5a666a" />
        <path d="M225 255Q235 210 275 212" fill="none" stroke="#67767b" strokeWidth="4" />
        <circle cx="433" cy="410" r="13" fill={D} stroke="#596366" strokeWidth="5" />
        <circle cx="555" cy="412" r="12" fill={D} stroke="#596366" strokeWidth="5" />
        <Screw x={279} y={270} r={44} />
        <Screw x={740} y={286} r={42} />
        <Screw x={488} y={436} r={32} />
      </g>
      {/* front motor blocks */}
      <g transform="translate(800 540) scale(.33333)" strokeLinejoin="round" stroke={E} strokeWidth="3">
        <circle cx="1237" cy="378" r="24" fill={D} stroke="#79868a" />
        <path d="M1285 362L1300 356L1377 462V500L1340 440Z" fill="#111415" />
        <path d="M838 430L885 520L905 790L850 720Z" fill="#30393b" />
        <path d="M838 425Q840 405 862 402L1000 384L1012 375L1140 382L1290 365L1308 368L1345 425L1340 445L1150 475L905 490L885 530L840 450Z" fill="#8f9b9f" />
        <path d="M838 430Q850 405 870 410L910 490L885 530Z" fill="url(#side)" stroke="none" />
        <path d="M1000 384Q1060 365 1110 395L1150 465Q1100 450 1045 465L1020 425Z" fill="url(#hump)" />
        <path d="M885 437L1035 415Q1080 405 1120 425L1320 395M1150 450L1340 422M1140 382L1172 445" fill="none" />
        <path d="M1150 458L1340 430L1345 450L1150 480Z" fill="#2a3032" />
        <path d="M882 520Q885 492 905 488L1045 465Q1100 452 1150 468V480L1100 765L905 791Z" fill={D} />
        <path d="M892 540Q892 518 910 514L1090 486M892 540L905 750Q905 768 920 766L1075 738" fill="none" stroke="#44494b" strokeWidth="4" />
        <circle cx="906" cy="531" r="11" fill="#4c5558" /><circle cx="1051" cy="519" r="11" fill="#4c5558" /><circle cx="918" cy="751" r="11" fill="#4c5558" /><circle cx="1060" cy="715" r="12" fill="#30383a" /><path d="M1088 535Q1060 540 1058 560Q1070 575 1088 573" fill="#2c3335" />
        <path d="M875 580L882 685" stroke="#6d797d" />
        <path d="M1375 468L1385 500L1415 515L1442 562L1400 550L1340 455Z" fill="#0e1112" />
        <path d="M1095 490L1110 480L1160 585L1148 675L1090 645Z" fill="#384144" />
        <path d="M1105 492L1130 482L1345 455L1385 500L1412 545L1178 588L1150 600Z" fill="#96a3a7" />
        <path d="M1105 492L1128 492L1178 580L1150 612L1128 575Z" fill="url(#side)" />
        <path d="M1155 545L1378 505" />
        <path d="M1178 585L1412 543Q1440 545 1442 565L1440 762L1410 795L1180 837L1152 812L1145 625Z" fill={D} />
        <path d="M1128 572L1178 585L1150 612Z" fill="#7a868a" stroke="none" />
        <path d="M1070 650L1128 637L1146 672L1088 686Z" fill="#96a3a7" />
        <path d="M1070 650L1088 686L1092 775L1072 735Z" fill="#30393b" />
        <path d="M1088 686L1146 672L1165 690V765L1092 776Z" fill={D} stroke="none" />
        <path d="M1146 672L1088 686L1092 776L1150 766" fill="none" />
        <path d="M1066 690L1080 688M1066 702L1080 700M1066 714L1080 712M1068 726L1080 724" stroke="#c5cfd2" strokeWidth="4" />
        {/* work coordinate system */}
        <path d="M1012 317L925 322L860 342L900 340Z" fill="#f3a3a0" stroke="#e07f7c" strokeWidth="2" />
        <path d="M1026 302L1012 215L1020 165L1030 215Z" fill="#5c8c62" stroke="#4f7d55" strokeWidth="2" />
        <path d="M1022 307L985 262L982 235L1000 248Z" fill="#7d9cf0" stroke="#5876d0" strokeWidth="2" />
        <g stroke="none" fontSize="38" fontWeight="400" fontFamily="Liberation Sans, sans-serif">
          <text x="1033" y="161" fill="#36a336">YC</text>
          <text x="988" y="229" fill="#1741e8">ZC</text>
          <text x="860" y="386" fill="#e32222">XC</text>
        </g>
      </g>
      {/* view triad */}
      <g strokeLinejoin="round">
        <path d="M427 903L451 898L458 910V931L434 936L428 925Z" fill="#cfd0d1" stroke="#aaa" />
        <path d="M427 903L434 914L458 911M434 914V936M428 925L452 921L451 898" fill="none" stroke="#aaa" />
        <path d="M448 914L458 931" stroke="#98a8e0" strokeWidth="3" />
        <path d="M459 932V904" stroke="#1d7a2a" strokeWidth="2.500" /><path d="M455.500 906L458.500 894L461.500 906Z" fill="#1d7a2a" />
        <path d="M459 933L430 938" stroke="#d22" strokeWidth="2.500" /><path d="M431 934L419 939L431 941Z" fill="#b81818" />
        <circle cx="459" cy="933" r="4" fill="#d5d5d5" stroke="#999" />
        <g fontFamily="Liberation Sans, sans-serif" fontSize="12"><text x="409" y="944" fill="#d22">X</text><text x="454" y="895" fill="#2a9a3a">Y</text><text x="442" y="914" fill="#8c9fe0">Z</text></g>
      </g>
    </svg>
  );
}

const docs: [string, string][] = [
  ["w-[171px]", "三角形連桿1.prt"],
  ["w-[171px]", "三角形連桿2.prt"],
  ["w-[186px]", "主軸手臂關節1.prt"],
  ["w-[186px]", "主軸手臂關節2.prt"],
  ["w-[147px]", "底座上蓋.prt"],
  ["w-[147px]", "底座下蓋.prt"],
  ["w-[170px]", "底座中間板.prt"],
];
function Viewport() {
  return (
    <main className="flex h-full min-w-0 flex-1 flex-col border-l border-[#8f8f8f]">
      <div className="flex h-[25px] w-full items-center border-b-2 border-[#55a0b9] bg-white text-[15px] whitespace-nowrap text-[#1a1a1a]">
        <div className="flex h-full w-[126px] items-center bg-[#55a0b9] pl-[7px] text-white">
          <Part /><span className="ml-[5px] w-[64px] font-normal tracking-[-0.1px]">uArm.prt</span>
          <span className="ml-[4px] flex"><Note c="#fff" /></span>
          <svg width="10" height="10" viewBox="0 0 10 10" className="ml-[5px]" stroke="#fff" strokeWidth="2"><path d="M1 1L9 9M9 1L1 9" /></svg>
        </div>
        {docs.map(([w, t]) => (
          <div key={t} className={`flex shrink-0 items-center pl-[7px] ${w}`}>
            <Part /><span className="ml-[5px]">{t}</span><span className="ml-[6px] flex"><Note /></span>
          </div>
        ))}
      </div>
      <div className="relative h-[779px] w-full bg-[linear-gradient(#b3b3b4_0%,#bcbcbd_6%,#c9cacb_28%,#d7d8d9_50%,#e4e5e6_70%,#e7e8e9_85%,#e5e7e8_100%)]">
        <Robot />
        <div className="absolute top-[156px] left-[893px] flex items-baseline whitespace-nowrap text-[#ee1c24]">
          <span className="text-[79px] leading-[120px] font-normal tracking-[-0.5px]">NX</span>
          <span className="-mt-px ml-[2px] text-[75px] leading-[120px] font-[350] [font-family:'Noto_Sans_CJK_TC',sans-serif]">檔</span>
        </div>
      </div>
    </main>
  );
}

/* ---------- taskbar ---------- */
const apps: [ReactNode, string?][] = [
  [<Ico s={30} vb="0 0 30 30"><defs><linearGradient id="win" x2="1" y2="1"><stop stopColor="#7fe0ff" /><stop offset="1" stopColor="#0a98f5" /></linearGradient></defs><path d="M.5 1H14V14.500H.5ZM15 1H29V14.500H15ZM.5 15.500H14V29.500H.5ZM15 15.500H29V29.500H15Z" fill="url(#win)" /></Ico>],
  [<Ico s={30} vb="0 0 30 30"><circle cx="17" cy="13" r="10.500" fill="#3d4f57" stroke="#f0f0f0" strokeWidth="2.600" /><path d="M9.500 21L3 28" stroke="#ddd" strokeWidth="3.400" strokeLinecap="round" /></Ico>],
  [<Ico s={30} vb="0 0 30 30"><rect x="0" y="9" width="22" height="19" fill="#666" /><rect x="7.500" y="1" width="22" height="19.500" fill="#f2f2f2" /><rect x="7.500" y="9" width="14.500" height="11.500" fill="#b2b2b2" /></Ico>],
  [<Ico s={30} vb="0 0 30 30"><defs><linearGradient id="chat" x2=".8" y2="1"><stop stopColor="#a268b0" /><stop offset=".5" stopColor="#6464cf" /><stop offset="1" stopColor="#5558c8" /></linearGradient></defs><path d="M15 1A14 14 0 1 1 9 28L1 29L3 22A14 14 0 0 1 15 1Z" fill="url(#chat)" /><rect x="7" y="9" width="12" height="12" rx="2" fill="#fff" /><path d="M20 13L24 10V20L20 17Z" fill="#fff" /></Ico>],
  [<Ico s={30} vb="0 0 30 30"><path d="M0 3Q0 2 1 2H10L13 5H29Q30 5 30 6V12H0Z" fill="#dd9f08" /><path d="M0 7H12L14 5H30V28H0Z" fill="#fdc83c" /><path d="M5 28V23Q5 21 7 21H23Q25 21 25 23V28Z" fill="#0e62b8" /><path d="M8 24.500H22" stroke="#083a78" /></Ico>, "dot"],
  [<Ico s={30} vb="0 0 30 30"><circle cx="15" cy="15" r="14" fill="#fbc116" /><path d="M15 15L2.900 8A14 14 0 0 1 27.100 8H15Z" fill="#e33b2e" /><path d="M15 15L9 18L2.900 8A14 14 0 0 0 14 29L21 18Z" fill="#2f9e4f" /><path d="M15 15L21 18L14 29A14 14 0 0 0 27.500 8.500H15Z" fill="#fbc116" /><circle cx="15" cy="15" r="6.600" fill="#fff" /><circle cx="15" cy="15" r="5.200" fill="#3f7fea" /></Ico>, "dot"],
  [<Ico s={30} vb="0 0 30 30"><path d="M0 11L13 1L30 11Z" fill="#0b5aae" /><path d="M2 10H28V22H2Z" fill="#eef2f5" /><path d="M0 10L15 19L0 29Z" fill="#1d8be0" /><path d="M0 29L30 10V29Z" fill="#48c0f4" /><path d="M0 29L15 19L30 29Z" fill="#2ea0e8" /></Ico>, "badge"],
  [<Ico s={30} vb="0 0 30 30"><rect width="30" height="30" rx="6" fill="#1fc6f3" /><path d="M14 0H24Q30 0 30 6V8Z" fill="#e9fbff" /><path d="M15 3L25.500 9V21L15 27L4.500 21V9Z" stroke="#fff" strokeWidth="1.400" /><path d="M11 10V20M12 15L19 10M13.500 14.500L19 20" stroke="#fff" strokeWidth="3" /></Ico>],
  [<Ico s={30} vb="0 0 30 30"><path d="M7 2H29V9H7Z" fill="#41a5ee" /><path d="M7 9H29V15H7Z" fill="#2b7cd3" /><path d="M7 15H29V22H7Z" fill="#185abd" /><path d="M7 22H29V28H7Z" fill="#103f91" /><rect x="0" y="8" width="15" height="15" rx="1.500" fill="#185abd" /><text x="7.500" y="19.500" textAnchor="middle" fontSize="11" fontWeight="700" fill="#fff" fontFamily="Noto Sans, sans-serif">W</text></Ico>],
  [<Ico s={30} vb="0 0 30 30"><circle cx="15" cy="15" r="15" fill="#5865f2" /><path d="M9 9Q15 6.500 21 9Q25 15 24 20Q22 22 19.500 22L18.500 20.500H11.500L10.500 22Q8 22 6 20Q5 15 9 9Z" fill="#fff" /><circle cx="12" cy="16" r="1.900" fill="#5865f2" /><circle cx="18" cy="16" r="1.900" fill="#5865f2" /></Ico>],
  [<Ico s={30} vb="0 0 30 30"><rect x="1" y="1" width="28" height="28" rx="7" fill="#3d8bfd" /><path d="M6 10H15Q18 10 18 13V20H9Q6 20 6 17ZM19 13L24 10V20L19 17Z" fill="#fff" /></Ico>],
  [<Ico s={30} vb="0 0 30 30"><rect x="1.500" y="4" width="27" height="22" fill="#050505" stroke="#b9b9b9" strokeWidth="1.600" /><path d="M2 5H28V7H2Z" fill="#ddd" /><path d="M4 10H7M9 11H13" stroke="#eee" strokeWidth="1.300" /></Ico>, "dot"],
  [<Ico s={30} vb="0 0 30 30"><circle cx="15" cy="15" r="14.500" fill="#2a2826" /><path d="M4 7Q12 1 22 3M3 10Q13 2 26 6M1 14Q12 4 28 10M1 18Q12 7 29 14M2 21Q13 10 29 18M4 24Q14 13 28 22M7 27Q15 17 26 25M11 29Q16 21 23 28" stroke="#a8a39c" strokeWidth="1.100" /><path d="M14 1Q9 6 8 14M22 3Q17 8 17 16Q17 23 19 28" stroke="#111" /></Ico>, "dot"],
  [<Ico s={30} vb="0 0 30 30"><circle cx="13.500" cy="15.500" r="11" fill="#1f6fe0" /><path d="M3 14Q5 8 12 6L14 16L11 26Q2 22 3 14Z" fill="#26b8e8" /><path d="M18 6Q24 10 24 16Q20 22 15 25Q14 14 18 6Z" fill="#7fd84a" /><path d="M18 6Q22 8 24 13L18 16Z" fill="#f0e23c" /><path d="M24 9C33 14 22 26 6 27" stroke="#f9b11c" strokeWidth="2.400" /><path d="M0 27L8 23V30Z" fill="#f9b11c" /><path d="M3 2L17 0L14 15Z" fill="#c41237" /><path d="M3 2L17 0L12 4Z" fill="#f8a4b4" /></Ico>, "active"],
  [<Ico s={30} vb="0 0 30 30"><path d="M14 0C24 9 27 15 26 20C24 32 5 32 4 20C4 12 12 9 14 0Z" fill="#28b9f2" /><path d="M14 0C24 9 27 15 26 20C20 16 12 20 6 24C3 18 10 13 12 8Z" fill="#9c5ad8" /><path d="M14 0C22 8 27 13 26 20C21 14 15 13 10 11Z" fill="#f0356e" /><path d="M14 0L19 6Q20 9 17 10L12 8Z" fill="#ffc21c" /></Ico>, "dot"],
];

function Taskbar() {
  return (
    <footer className="flex h-[60px] w-full items-center bg-[linear-gradient(90deg,#142b36_0%,#152c37_48%,#162d35_65%,#242829_74%,#262727_76%,#1a2930_79%,#12293a_82%,#132c37_100%)] font-normal whitespace-nowrap text-white">
      <div className="flex w-[548px] items-center pl-[35px]">
        <svg width="32" height="26" viewBox="0 0 32 26"><path d="M7 23A6 6 0 0 1 6 11A9 9 0 0 1 22 8A7.500 7.500 0 0 1 25 23Z" fill="#cfdcf3" /><path d="M10 23A5 5 0 0 1 12 13Q17 8 22 13Q29 13 28 20Q27 23 24 23Z" fill="#eef3fc" /><path d="M28.500 7V15M28.500 17.500V20" stroke="#e01b3a" strokeWidth="3.400" /></svg>
        <div className="ml-[8px] flex flex-col pt-px text-[14.300px] leading-[20px]"><span>26°C</span><span className="font-[350] text-[#d4dade]">多雲</span></div>
      </div>
      {apps.map(([ic, st], i) => (
        <div key={i} className="relative flex h-[60px] w-[55px] shrink-0 items-center justify-center">
          {st === "active" && <div className="absolute inset-x-[3px] top-[5px] h-[50px] rounded-[4px] border border-[#30444e] bg-[#273a44]" />}
          <div className="relative">{ic}</div>
          {st === "badge" && <span className="absolute top-[9px] left-[29px] flex h-[20px] w-[20px] items-center justify-center rounded-full bg-[#4cc2ff] text-[13.500px] text-[#111]">4</span>}
          {st === "dot" && <span className="absolute bottom-[6px] h-[4px] w-[8px] rounded-full bg-[#9aa2a6]" />}
          {st === "active" && <span className="absolute bottom-[6px] h-[4px] w-[20px] rounded-full bg-[#4cc2ff]" />}
        </div>
      ))}
      <div className="ml-auto flex items-center">
        <svg width="16" height="10" viewBox="0 0 16 10" fill="none" stroke="#fff" strokeWidth="1.400"><path d="M1 9L8 1L15 9" /></svg>
        <svg width="21" height="14" viewBox="0 0 21 14" className="ml-[12px]"><path d="M5 13A4.500 4.500 0 0 1 4 4.500A6 6 0 0 1 15 4A4.500 4.500 0 0 1 16 13Z" fill="#9aa1a5" /><path d="M3 12L11 6Q17 3 20 8Q21 13 16 13H5Z" fill="#fff" /></svg>
        <span className="ml-[13px] text-[20px]">英</span>
        <svg width="21" height="16" viewBox="0 0 21 16" className="ml-[20px]" fill="none" stroke="#fff" strokeWidth="1.400"><path d="M1 6Q10.500 -3 20 6M4 9Q10.500 2.500 17 9M7 12Q10.500 8 14 12" /><circle cx="10.500" cy="14" r="1.300" fill="#fff" /></svg>
        <svg width="21" height="18" viewBox="0 0 21 18" className="ml-[9px]" fill="none" stroke="#fff" strokeWidth="1.300"><path d="M1 6.500H4.500L9 2.500V15.500L4.500 11.500H1ZM12 6.500Q14 9 12 11.500M14.500 4.500Q18 9 14.500 13.500M17 2Q22.500 9 17 16" /></svg>
        <svg width="20" height="17" viewBox="0 0 20 17" className="ml-[10px]" fill="none"><path d="M2 1V4M6 1V4M0 4.500H8V7Q7 10 4 10V15" stroke="#fff" strokeWidth="1.300" /><path d="M9 4H15.500Q17.500 4 17.500 6V13Q17.500 15 15.500 15H6.500V11" stroke="#fff" strokeWidth="1.300" /><path d="M9.500 5H16.500V14H7.500V11Z" fill="#fff" /><path d="M19.200 7V12" stroke="#fff" strokeWidth="1.500" /></svg>
        <div className="ml-[10px] flex w-[74px] flex-col items-end text-[14px] leading-[20px] tracking-[-0.4px]"><span>上午 01:13</span><span>2022/6/7</span></div>
        <span className="mr-[22px] ml-[9px] flex h-[24px] w-[24px] items-center justify-center rounded-full bg-[#4cc2ff] text-[12.500px] text-[#111]">21</span>
      </div>
    </footer>
  );
}

export default function App() {
  return (
    <div className="flex h-[1080px] w-[1920px] flex-col overflow-hidden bg-white font-[350] [font-family:'Noto_Sans','Noto_Sans_CJK_TC',sans-serif]">
      <TitleBar />
      <MenuTabs />
      <Ribbon />
      <SelectionBar />
      <div className="flex h-[804px] w-full">
        <Rail />
        <Navigator />
        <Viewport />
      </div>
      <div className="flex h-[22px] w-full items-start justify-end gap-[4px] border-t border-[#a3a3a3] bg-white pt-[2px] pr-[54px]">
        <Ico s={16}><rect x=".5" y=".5" width="15" height="15" fill="#d9d9d9" stroke="#bbb" /><path d="M4 14L4 4Q8 1 13 4V10Q8 7 4 10" fill="#f3f3f3" stroke="#999" /><path d="M5 4H7V6H5ZM9 4H11V6H9ZM7 6H9V8H7ZM11 6H13V8H11Z" fill="#999" /></Ico>
        <FullIcon />
      </div>
      <Taskbar />
    </div>
  );
}
